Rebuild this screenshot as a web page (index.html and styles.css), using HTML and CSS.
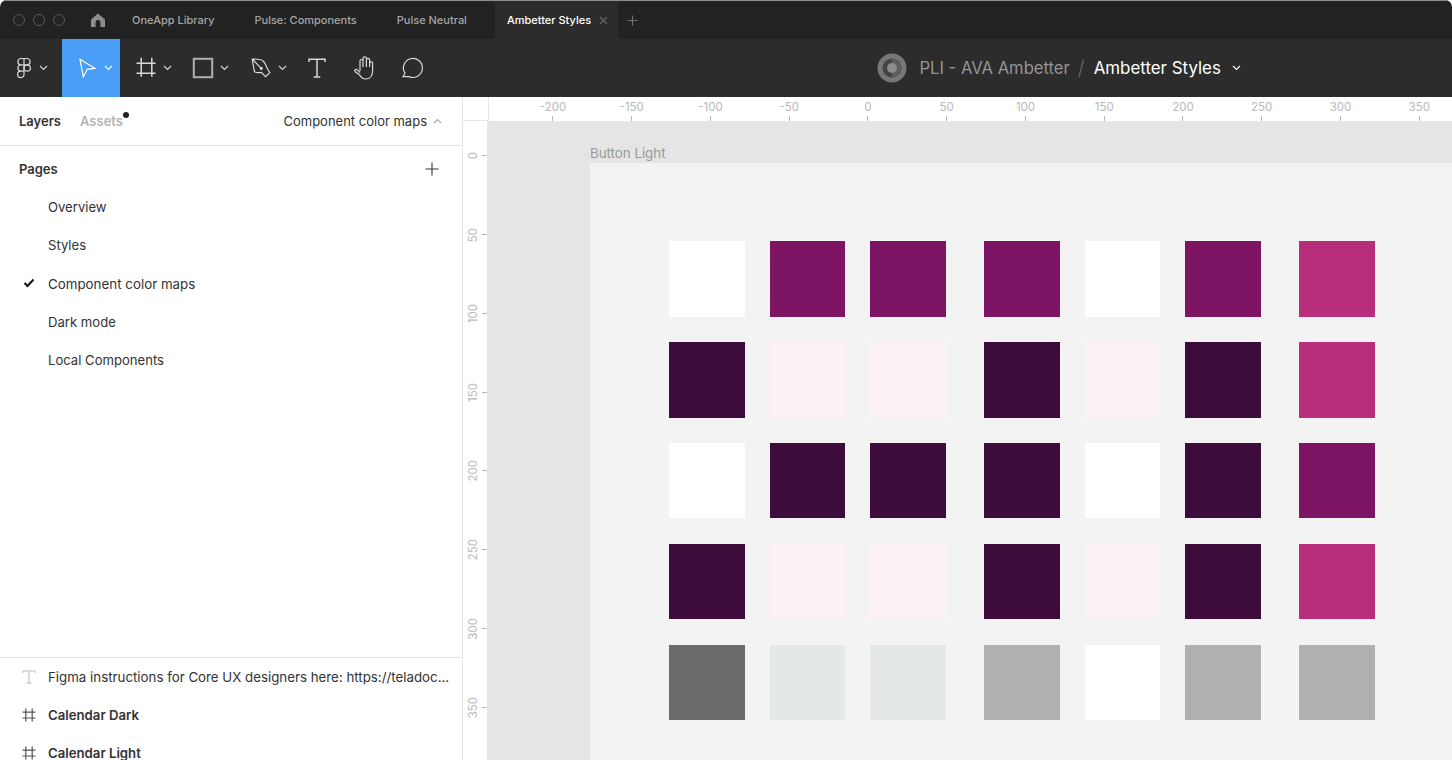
FILE: index.html
```html
<!DOCTYPE html>
<html lang="en">
<head>
  <meta charset="UTF-8">
  <title>Ambetter Styles</title>
  <link rel="stylesheet" href="styles.css">
</head>
<body>
<div class="window">

  <div class="tabbar">
    <div class="lights"><i></i><i></i><i></i></div>
    <svg class="home" width="16" height="16" viewBox="0 0 16 16"><path d="M8 1.500 15 7.600V15h-4.600v-4.600a2.400 2.400 0 0 0-4.800 0V15H1V7.600z" fill="#8c8c8c"/></svg>
    <div class="tab">OneApp Library</div>
    <div class="tab">Pulse: Components</div>
    <div class="tab">Pulse Neutral</div>
    <div class="tab tab-active">
      Ambetter Styles
      <svg width="9" height="9" viewBox="0 0 9 9"><path d="M1 1l7 7M8 1L1 8" stroke="#666" stroke-width="1.100"/></svg>
    </div>
    <svg class="tab-add" width="11" height="11" viewBox="0 0 11 11"><path d="M5.500 0.500v10M0.500 5.500h10" stroke="#6e6e6e" stroke-width="1.200"/></svg>
  </div>

  <div class="toolbar">
    <div class="tool tool-logo">
      <svg width="24" height="24" viewBox="0 0 24 24" class="ico"><path d="M12 2.500H8.700a3.200 3.200 0 0 0 0 6.350H12zM12 2.500h3.300a3.200 3.200 0 0 1 0 6.350H12zM12 8.850H8.700a3.200 3.200 0 0 0 0 6.350H12zM8.700 15.200H12v3.150a3.200 3.200 0 1 1-3.300-3.150z"/><circle cx="15.200" cy="12" r="3.200"/></svg>
      <svg class="chev" width="9" height="6" viewBox="0 0 9 6"><path d="M1 1l3.500 3.500L8 1"/></svg>
    </div>
    <div class="tool tool-active">
      <svg width="24" height="24" viewBox="0 0 24 24" class="ico ico-white"><path d="M4 3.300 19 12.300 11.300 13.300 7.300 20.700z"/></svg>
      <svg class="chev chev-white" width="9" height="6" viewBox="0 0 9 6"><path d="M1 1l3.500 3.500L8 1"/></svg>
    </div>
    <div class="tool">
      <svg width="24" height="24" viewBox="0 0 24 24" class="ico"><path d="M7.200 1.700v19M17.800 1.700v19M2.500 7.300h19M2.500 17.300h19" stroke-width="1.500"/></svg>
      <svg class="chev" width="9" height="6" viewBox="0 0 9 6"><path d="M1 1l3.500 3.500L8 1"/></svg>
    </div>
    <div class="tool tool-shape">
      <svg width="24" height="24" viewBox="0 0 24 24" class="ico ico-rect"><rect x="2.800" y="2.800" width="18.400" height="18.400"/></svg>
      <svg class="chev" width="9" height="6" viewBox="0 0 9 6"><path d="M1 1l3.500 3.500L8 1"/></svg>
    </div>
    <div class="tool">
      <svg width="24" height="24" viewBox="0 0 24 24" class="ico"><path d="M3.200 3C8 3 12 3.600 13.500 4.500 15.500 6 17 9 18.200 12.300L20.800 16.700 16.500 20.700 12.500 16.300C10 16.800 7 16.500 5.500 15.700 4.500 11 3.800 7 3.200 3zM3.200 3l9 9.300"/><circle cx="12.200" cy="12.300" r="1" fill="#d8d8d8"/></svg>
      <svg class="chev" width="9" height="6" viewBox="0 0 9 6"><path d="M1 1l3.500 3.500L8 1"/></svg>
    </div>
    <div class="tool tool-plain">
      <svg width="24" height="24" viewBox="0 0 24 24" class="ico"><path d="M4 6V3.200h16V6M12 3.200V21M8.700 21h6.600" stroke-width="1.500"/></svg>
    </div>
    <div class="tool tool-plain">
      <svg width="24" height="24" viewBox="0 0 24 24" class="ico"><path d="M7 15V5a1.500 1.500 0 0 1 3 0v6M10 11V2.600a1.700 1.700 0 0 1 3.400 0V11M13.400 11V4a1.600 1.600 0 0 1 3.200 0v7M16.600 11V7.300a1.500 1.500 0 0 1 3 0V15c0 5-3 8-7 8-3 0-4.500-1.500-6-4L2 15.500c-1-1.500 1-3 2.300-1.700L7 16.500"/></svg>
    </div>
    <div class="tool tool-plain tool-comment">
      <svg width="24" height="24" viewBox="0 0 24 24" class="ico"><path d="M3 20.700 5 17.200A9.500 9.500 0 1 1 9 20.600z"/></svg>
    </div>

    <div class="crumbs">
      <svg width="30" height="30" viewBox="0 0 30 30"><circle cx="15" cy="15" r="14.500" fill="#777"/><circle cx="15" cy="15" r="9.500" fill="#444"/><path d="M15 5.500a9.500 9.500 0 0 1 0 19z" fill="#5e5e5e"/><circle cx="15" cy="15" r="5" fill="#8c8c8c"/></svg>
      <span class="crumb-team">PLI - AVA Ambetter</span>
      <span class="crumb-sep">/</span>
      <span class="crumb-file">Ambetter Styles</span>
      <svg class="chev chev-white" width="9" height="6" viewBox="0 0 9 6"><path d="M1 1l3.500 3.500L8 1"/></svg>
    </div>
  </div>

  <div class="main">
    <aside class="sidebar">
      <div class="side-head">
        <span class="side-tab">Layers</span>
        <span class="side-tab side-tab-off">Assets<i class="dot"></i></span>
        <span class="page-pick">Component color maps
          <svg width="9" height="6" viewBox="0 0 9 6"><path d="M1 5l3.500-3.500L8 5" fill="none" stroke="#aaa" stroke-width="1.200"/></svg>
        </span>
      </div>

      <div class="pages">
        <div class="pages-head">
          <span>Pages</span>
          <svg width="14" height="14" viewBox="0 0 14 14"><path d="M7 0.500v13M0.500 7h13" stroke="#333" stroke-width="1.100"/></svg>
        </div>
        <div class="page">Overview</div>
        <div class="page">Styles</div>
        <div class="page page-on">
          <svg width="12" height="10" viewBox="0 0 12 10"><path d="M1.500 5 4.500 8 10.500 1.500" fill="none" stroke="#111" stroke-width="2"/></svg>
          Component color maps
        </div>
        <div class="page">Dark mode</div>
        <div class="page">Local Components</div>
      </div>

      <div class="layers">
        <div class="layer layer-text">
          <svg width="14" height="14" viewBox="0 0 14 14"><path d="M1 3V1h12v2M7 1v12M4.500 13h5" fill="none" stroke="#bbb" stroke-width="1"/></svg>
          <span class="layer-name">Figma instructions for Core UX designers here: https://teladoc...</span>
        </div>
        <div class="layer layer-frame">
          <svg width="14" height="14" viewBox="0 0 14 14"><path d="M3.800 0.500v13M10.200 0.500v13M0.500 4.200h13M0.500 10h13" fill="none" stroke="#555" stroke-width="1.200"/></svg>
          <span class="layer-name">Calendar Dark</span>
        </div>
        <div class="layer layer-frame">
          <svg width="14" height="14" viewBox="0 0 14 14"><path d="M3.800 0.500v13M10.200 0.500v13M0.500 4.200h13M0.500 10h13" fill="none" stroke="#555" stroke-width="1.200"/></svg>
          <span class="layer-name">Calendar Light</span>
        </div>
      </div>
    </aside>

    <div class="stage">
      <div class="ruler-top">
        <div class="corner"></div>
        <div class="mark"><span>-200</span><i></i></div>
        <div class="mark"><span>-150</span><i></i></div>
        <div class="mark"><span>-100</span><i></i></div>
        <div class="mark"><span>-50</span><i></i></div>
        <div class="mark"><span>0</span><i></i></div>
        <div class="mark"><span>50</span><i></i></div>
        <div class="mark"><span>100</span><i></i></div>
        <div class="mark"><span>150</span><i></i></div>
        <div class="mark"><span>200</span><i></i></div>
        <div class="mark"><span>250</span><i></i></div>
        <div class="mark"><span>300</span><i></i></div>
        <div class="mark"><span>350</span><i></i></div>
      </div>
      <div class="stage-body">
        <div class="ruler-left">
          <div class="vmark"><span>0</span><i></i></div>
          <div class="vmark"><span>50</span><i></i></div>
          <div class="vmark"><span>100</span><i></i></div>
          <div class="vmark"><span>150</span><i></i></div>
          <div class="vmark"><span>200</span><i></i></div>
          <div class="vmark"><span>250</span><i></i></div>
          <div class="vmark"><span>300</span><i></i></div>
          <div class="vmark"><span>350</span><i></i></div>
        </div>
        <div class="canvas">
          <div class="frame-label">Button Light</div>
          <div class="frame">
            <div class="row"><div class="sw white"></div><div class="sw purple"></div><div class="sw purple"></div><div class="sw purple"></div><div class="sw white"></div><div class="sw purple"></div><div class="sw magenta"></div></div>
            <div class="row"><div class="sw dark"></div><div class="sw pink"></div><div class="sw pink"></div><div class="sw dark"></div><div class="sw pink"></div><div class="sw dark"></div><div class="sw magenta"></div></div>
            <div class="row"><div class="sw white"></div><div class="sw dark"></div><div class="sw dark"></div><div class="sw dark"></div><div class="sw white"></div><div class="sw dark"></div><div class="sw purple"></div></div>
            <div class="row"><div class="sw dark"></div><div class="sw pink"></div><div class="sw pink"></div><div class="sw dark"></div><div class="sw pink"></div><div class="sw dark"></div><div class="sw magenta"></div></div>
            <div class="row"><div class="sw slate"></div><div class="sw mist"></div><div class="sw mist"></div><div class="sw silver"></div><div class="sw white"></div><div class="sw silver"></div><div class="sw silver"></div></div>
          </div>
        </div>
      </div>
    </div>
  </div>

</div>
</body>
</html>
```

FILE: styles.css
```css
* {
  box-sizing: border-box;
}

html, body {
  height: 100%;
}

body {
  margin: 0;
  background: #fff;
  overflow: hidden;
  font: 13px/16px Inter, "Noto Sans", sans-serif;
  color: #333;
}

.window {
  height: 760px;
  display: flex;
  flex-direction: column;
  overflow: hidden;
  border-radius: 7px 7px 0 0;
}

/* tabs */
.tabbar {
  height: 39px;
  flex: none;
  display: flex;
  align-items: center;
  background: #222;
  border-top: 1px solid #8f8f8f;
  color: #a6a6a6;
  font-size: 11px;
  font-weight: 500;
}

.lights {
  display: flex;
  gap: 8px;
  margin-left: 13px;
}

.lights i {
  width: 12px;
  height: 12px;
  border: 1px solid #5a5a5a;
  border-radius: 50%;
}

.home {
  margin: 0 6px 0 25px;
}

.tab {
  padding: 0 20px;
  white-space: nowrap;
}

.tab-active {
  height: 38px;
  width: 123px;
  margin-left: 8px;
  padding: 0 0 0 12px;
  display: flex;
  align-items: center;
  gap: 8px;
  background: #2c2c2c;
  color: #fff;
}

.tab-add {
  margin-left: 9px;
}

/* tools */
.toolbar {
  height: 58px;
  flex: none;
  display: flex;
  align-items: center;
  background: #2c2c2c;
}

.tool {
  width: 57.5px;
  height: 58px;
  flex: none;
  display: flex;
  align-items: center;
  padding-left: 14px;
  gap: 5px;
}

.tool-logo {
  width: 62px;
  padding-left: 11.5px;
  gap: 3px;
}

.tool-active {
  width: 58px;
  background: #4a9ef5;
  gap: 4px;
}

.tool-shape {
  padding-left: 13px;
}

.tool-plain {
  width: 48px;
  padding-left: 12px;
}

.tool-comment {
  padding-left: 11px;
}

.ico {
  flex: none;
  fill: none;
  stroke: #d8d8d8;
  stroke-width: 1.2;
}

.ico-white {
  stroke: #fff;
}

.ico-rect {
  stroke: #b0b0b0;
  stroke-width: 2;
}

.chev {
  flex: none;
  fill: none;
  stroke: #d0d0d0;
  stroke-width: 1.2;
}

.chev-white {
  stroke: #fff;
}

.crumbs {
  margin-left: 440px;
  display: flex;
  align-items: center;
  font-size: 16.6px;
  white-space: nowrap;
}

.crumb-team {
  margin-left: 13px;
  color: #959595;
}

.crumb-sep {
  margin: 0 9px 0 8px;
  color: #666;
  font-size: 20px;
  font-weight: 300;
}

.crumb-file {
  color: #fff;
  font-size: 16.9px;
  margin-right: 11px;
}

/* left panel */
.main {
  flex: 1;
  display: flex;
  min-height: 0;
}

.sidebar {
  width: 463px;
  flex: none;
  display: flex;
  flex-direction: column;
  border-right: 1px solid #e5e5e5;
  overflow: hidden;
}

.side-head {
  height: 49px;
  flex: none;
  display: flex;
  align-items: center;
  padding: 0 20px 0 19px;
  border-bottom: 1px solid #e5e5e5;
}

.side-tab {
  position: relative;
  font-weight: 600;
  margin-right: 19px;
}

.side-tab-off {
  color: #b3b3b3;
}

.dot {
  position: absolute;
  top: -1px;
  right: -6px;
  width: 6px;
  height: 6px;
  border-radius: 50%;
  background: #222;
}

.page-pick {
  margin-left: auto;
  display: flex;
  align-items: center;
  gap: 6px;
}

.pages {
  flex: 1;
}

.pages-head {
  display: flex;
  align-items: center;
  justify-content: space-between;
  padding: 3px 23px 0 19px;
  height: 42px;
  font-weight: 600;
}

.page {
  height: 38.3px;
  display: flex;
  align-items: center;
  padding-left: 48px;
  position: relative;
  font-size: 13.1px;
}

.page-on {
  font-size: 13.35px;
}

.page-on svg {
  position: absolute;
  left: 23px;
  top: 13px;
}

.layers {
  flex: none;
  height: 103px;
  border-top: 1px solid #e5e5e5;
}

.layer {
  height: 38px;
  display: flex;
  align-items: center;
  padding-left: 22px;
  gap: 12px;
  white-space: nowrap;
}

.layer-text {
  font-size: 13.3px;
}

.layer-frame {
  font-size: 13.2px;
  font-weight: 600;
}

/* rulers + canvas */
.stage {
  flex: 1;
  min-width: 0;
  display: flex;
  flex-direction: column;
}

.ruler-top {
  height: 24px;
  flex: none;
  display: flex;
  overflow: hidden;
}

.corner {
  width: 50.6px;
  flex: none;
  position: relative;
}

.corner::after {
  content: '';
  position: absolute;
  left: 0;
  bottom: 0;
  width: 25px;
  height: 100%;
  border-right: 1px solid #e5e5e5;
  border-bottom: 1px solid #e5e5e5;
}

.mark {
  width: 78.75px;
  flex: none;
  display: flex;
  flex-direction: column;
  align-items: center;
  justify-content: space-between;
  color: #b9b9b9;
  font-size: 11.5px;
  line-height: 14px;
  padding-top: 3px;
}

.mark i {
  width: 1px;
  height: 5px;
  background: #b5b5b5;
}

.stage-body {
  flex: 1;
  display: flex;
  min-height: 0;
}

.ruler-left {
  width: 24px;
  flex: none;
  overflow: hidden;
}

.vmark {
  height: 78.75px;
  display: flex;
  align-items: center;
  justify-content: space-between;
  color: #b9b9b9;
  font-size: 11.5px;
  padding-left: 3px;
}

.vmark:first-child {
  margin-top: -4.4px;
}

.vmark span {
  writing-mode: vertical-rl;
  transform: rotate(180deg);
  line-height: 14px;
}

.vmark i {
  width: 5px;
  height: 1px;
  background: #b5b5b5;
}

.canvas {
  flex: 1;
  min-width: 0;
  display: flex;
  flex-direction: column;
  background: #e5e5e5;
  padding-left: 103px;
  overflow: hidden;
}

.frame-label {
  height: 42px;
  padding-top: 24px;
  color: #999;
  font-size: 13.3px;
  line-height: 16px;
}

.frame {
  flex: 1;
  background: #f3f3f3;
  padding: 78px 0 0 79px;
  display: flex;
  flex-direction: column;
  gap: 25.2px;
}

.row {
  display: flex;
  gap: 25px;
}

.sw {
  width: 75.7px;
  height: 75.7px;
  flex: none;
}

.sw:nth-child(4), .sw:nth-child(7) {
  margin-left: 13px;
}

.white { background: #fff; }
.purple { background: #7d1464; }
.dark { background: #3e0c3b; }
.pink { background: #fbf1f7; }
.magenta { background: #b82e7c; }
.slate { background: #6b6b6b; }
.mist { background: #e4e8e9; }
.silver { background: #b0b0b0; }
```
